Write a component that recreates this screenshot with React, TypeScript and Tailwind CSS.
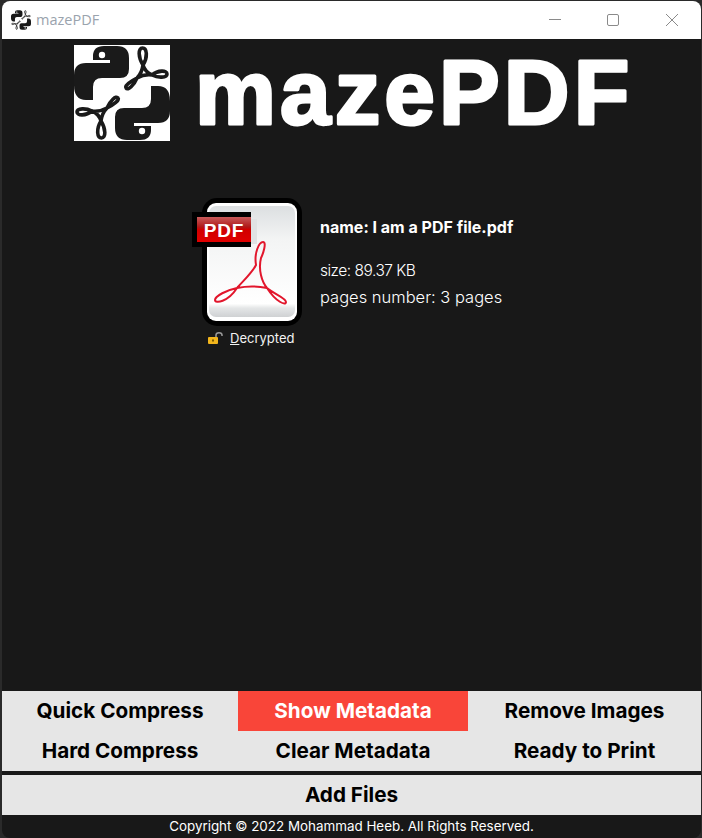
import React from 'react';

const snake = 'M30 1 H43 Q55 1 55 13 V24 Q55 33 46 33 H28 Q19 33 19 42 V55 H12 Q0 55 0 40 V30 Q0 18 12 18 H36 V15 H19 V11 Q19 1 30 1 Z';
const loops =
  'M69 20 C64 12 64 3 68.5 3 C73 3 74 12 69 20 M78 30 C84 25 93 25 93 29 C93 33 84 33 78 30 M63 33 C57 36 50 41 52 43 C54 46 60 40 63 33 M69 20 Q68 28 63 33 Q70 29 78 30 Q71 27 69 20 Z';

function LogoHalf() {
  return (
    <>
      <path d={snake} fill="#1a1a1a" />
      <circle cx="28" cy="10" r="3.2" fill="#fff" />
      <path d={loops} fill="none" stroke="#1a1a1a" strokeWidth="3.6" />
    </>
  );
}

function Logo({ className }: { className: string }) {
  return (
    <svg viewBox="0 0 96 96" className={className}>
      <LogoHalf />
      <g transform="rotate(180 48 48)">
        <LogoHalf />
      </g>
    </svg>
  );
}

function PdfIcon() {
  return (
    <svg viewBox="0 0 110 130" className="h-[130px] w-[110px]">
      <defs>
        <linearGradient id="page" x1="0" y1="0" x2="0" y2="1">
          <stop offset="0" stopColor="#dcdfe1" />
          <stop offset="0.3" stopColor="#f3f4f4" />
          <stop offset="0.88" stopColor="#ffffff" />
          <stop offset="0.92" stopColor="#e4e6e7" />
          <stop offset="1" stopColor="#cfd1d3" />
        </linearGradient>
        <linearGradient id="ribbon" x1="0" y1="0" x2="0" y2="1">
          <stop offset="0" stopColor="#c85a5a" />
          <stop offset="0.4" stopColor="#b01818" />
          <stop offset="0.5" stopColor="#d00000" />
          <stop offset="1" stopColor="#e00000" />
        </linearGradient>
      </defs>
      <rect x="10" y="0" width="100" height="128" rx="15" fill="#000" />
      <rect x="15" y="5" width="90" height="118" rx="9" fill="#fff" />
      <rect x="17" y="8" width="86" height="111" rx="7" fill="url(#page)" />
      <rect x="59" y="21" width="6" height="25" fill="#e0e2e3" />
      <rect x="0" y="14" width="59" height="35" fill="#000" />
      <rect x="5" y="19" width="54" height="25" fill="url(#ribbon)" />
      <text x="32" y="39" textAnchor="middle" fill="#fff" fontSize="19" fontWeight="700" fontFamily="'Liberation Sans', sans-serif" letterSpacing="0.8">PDF</text>
      <path
        d="M64 67 C62 55 67 44 71 44 C75 44 71 56 69 60 C66 72 70 84 75 90 C82 96 94 100 94 104 C94 108 84 104 75 90 Q60 87 45 90 C35 92 23 98 23 102 C23 106 36 104 45 90 C52 82 60 75 64 67 Z"
        fill="none"
        stroke="#e2162c"
        strokeWidth="2"
      />
    </svg>
  );
}

function ActionButton({ label, active }: { label: string; active?: boolean }) {
  return (
    <div className={`flex h-10 items-center justify-center font-['Inter',sans-serif] text-[20.7px] font-bold ${active ? 'bg-[#f94539] text-white' : 'bg-[#e6e6e6] text-black'}`}>
      {label}
    </div>
  );
}

export default function App() {
  return (
    <div className="flex h-[838px] w-[702px] flex-col overflow-hidden bg-[#2a2a2a] pt-px pl-[2px] pr-px">
      <div className="flex h-[837px] flex-col overflow-hidden rounded-[8px] bg-[#181818]">
        {/* Title bar */}
        <div className="flex h-[38px] shrink-0 items-center bg-white">
          <Logo className="ml-[9px] h-5 w-5" />
          <span className="ml-[5px] font-['Open_Sans',sans-serif] text-[14.5px] text-[#9aa3ad]">mazePDF</span>
          <div className="ml-auto flex">
            <div className="flex h-[38px] w-[58px] items-center justify-center">
              <svg width="14" height="14" viewBox="0 0 14 14"><path d="M1 6.5H13" stroke="#8a8a8a" /></svg>
            </div>
            <div className="flex h-[38px] w-[58px] items-center justify-center">
              <svg width="14" height="14" viewBox="0 0 14 14"><rect x="1.5" y="1.5" width="11" height="11" rx="1.5" fill="none" stroke="#8a8a8a" /></svg>
            </div>
            <div className="flex h-[38px] w-[59px] items-center justify-center">
              <svg width="14" height="14" viewBox="0 0 14 14"><path d="M1 1L13 13M13 1L1 13" stroke="#8a8a8a" /></svg>
            </div>
          </div>
        </div>

        {/* Header */}
        <div className="mt-[6px] flex items-start pl-[72px]">
          <div className="h-24 w-24 bg-white">
            <Logo className="h-24 w-24" />
          </div>
          {/* wordmark has rounded corners, so real text with a round-joined stroke */}
          <svg width="450" height="109" className="ml-[25px] mt-[-5px]">
            <text
              x="0"
              y="84"
              fill="#fff"
              stroke="#fff"
              strokeWidth="3"
              strokeLinejoin="round"
              fontSize="91"
              fontWeight="700"
              letterSpacing="4.1"
              fontFamily="'Liberation Sans', sans-serif"
            >
              mazePDF
            </text>
          </svg>
        </div>

        {/* File info */}
        <div className="mt-[49px] flex items-start pl-[190px]">
          <div className="flex flex-col">
            <PdfIcon />
            <div className="ml-4 mt-px flex items-center gap-[6px] font-['Inter',sans-serif] text-[13px] leading-[18px] text-[#f2f2f2]">
              <svg width="16" height="14" viewBox="0 0 16 14">
                <path d="M8 6V4 C8 1 14 1 14 4 V5" fill="none" stroke="#9a9a9a" strokeWidth="1.5" />
                <rect x="0" y="6" width="10" height="7" rx="1" fill="#f2b51c" />
                <rect x="4" y="8.5" width="2" height="2" fill="#7a5a00" />
              </svg>
              <span><span className="underline">D</span>ecrypted</span>
            </div>
          </div>
          <div className="ml-[18px] mt-[19px] flex flex-col font-['Inter',sans-serif] text-white">
            <div className="text-[16px] font-bold leading-5">name: I am a PDF file.pdf</div>
            <div className="mt-6 text-[15.5px] font-light leading-5 tracking-[-0.5px]">size: 89.37 KB</div>
            <div className="mt-[6px] text-[16.5px] font-light leading-5">pages number: 3 pages</div>
          </div>
        </div>

        {/* Actions */}
        <div className="mt-auto">
          <div className="grid grid-cols-[236px_230px_1fr]">
            <ActionButton label="Quick Compress" />
            <ActionButton label="Show Metadata" active />
            <ActionButton label="Remove Images" />
            <ActionButton label="Hard Compress" />
            <ActionButton label="Clear Metadata" />
            <ActionButton label="Ready to Print" />
          </div>
          <div className="mt-1">
            <ActionButton label="Add Files" />
          </div>
          <div className="flex h-[23px] items-center justify-center font-['Inter',sans-serif] text-[13.4px] text-white">
            Copyright © 2022 Mohammad Heeb. All Rights Reserved.
          </div>
        </div>
      </div>
    </div>
  );
}
